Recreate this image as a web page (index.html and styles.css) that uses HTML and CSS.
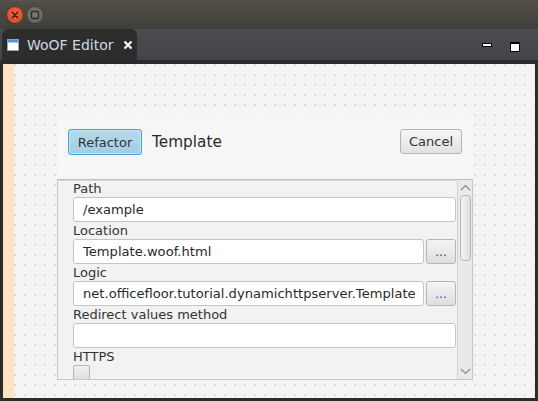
FILE: index.html
```html
<!DOCTYPE html>
<html>
<head>
<meta charset="utf-8">
<link rel="stylesheet" href="styles.css">
</head>
<body>
<div class="window">
  <div class="titlebar">
    <span class="wbtn close">
      <svg width="16" height="16" viewBox="0 0 16 16"><path d="M5.3 5.3 L10.7 10.7 M10.7 5.3 L5.3 10.7" stroke="#3a1a10" stroke-width="1.4" stroke-linecap="round"/></svg>
    </span>
    <span class="wbtn max">
      <svg width="16" height="16" viewBox="0 0 16 16"><rect x="4.5" y="4.5" width="7" height="7" rx="1" fill="none" stroke="#2c2b28" stroke-width="1.3"/></svg>
    </span>
  </div>
  <div class="tabbar">
    <div class="tab">
      <svg class="tabicon" width="12" height="12" viewBox="0 0 12 12"><rect x="0.5" y="0.5" width="11" height="11" fill="#ffffff" stroke="#8fa6c0"/><rect x="1" y="1" width="10" height="2.5" fill="#5d8fcf"/></svg>
      <span class="tabtitle">WoOF Editor</span>
      <svg class="tabclose" width="10" height="10" viewBox="0 0 10 10"><path d="M1.5 1.5 L8.5 8.5 M8.5 1.5 L1.5 8.5" stroke="#ffffff" stroke-width="2.2"/></svg>
    </div>
    <div class="tabtools">
      <span class="tminimize"></span>
      <span class="tmaximize"></span>
    </div>
  </div>
  <div class="frame">
    <div class="gutter"></div>
    <div class="canvas">
      <div class="dialog">
        <div class="dheader">
          <button class="btn refactor">Refactor</button>
          <span class="dtitle">Template</span>
          <button class="btn cancel">Cancel</button>
        </div>
        <div class="list">
          <div class="form">
            <div class="label">Path</div>
            <div class="row"><div class="field">/example</div></div>
            <div class="label">Location</div>
            <div class="row"><div class="field">Template.woof.html</div><button class="dots">...</button></div>
            <div class="label">Logic</div>
            <div class="row"><div class="field">net.officefloor.tutorial.dynamichttpserver.Template</div><button class="dots">...</button></div>
            <div class="label">Redirect values method</div>
            <div class="row"><div class="field"></div></div>
            <div class="label">HTTPS</div>
            <div class="check"></div>
          </div>
          <div class="scrollbar">
            <svg class="arrow" width="11" height="7" viewBox="0 0 11 7"><path d="M1 6 L5.5 1.5 L10 6" fill="none" stroke="#8a8a8a" stroke-width="1.2"/></svg>
            <div class="track"><div class="thumb"></div></div>
            <svg class="arrow" width="11" height="7" viewBox="0 0 11 7"><path d="M1 1 L5.5 5.5 L10 1" fill="none" stroke="#8a8a8a" stroke-width="1.2"/></svg>
          </div>
        </div>
      </div>
    </div>
  </div>
</div>
</body>
</html>
```

FILE: styles.css
```css
html, body {
  margin: 0;
  padding: 0;
  background: #2b2b2b;
}
.window {
  width: 538px;
  height: 401px;
  display: flex;
  flex-direction: column;
  font-family: "DejaVu Sans", sans-serif;
  overflow: hidden;
}
.titlebar {
  height: 29px;
  flex: none;
  box-sizing: border-box;
  background: linear-gradient(#5a574f 0, #514e47 2px, #3f3e3a 100%);
  display: flex;
  align-items: center;
  padding: 0 0 0 7px;
  gap: 4px;
}
.wbtn {
  width: 16px;
  height: 16px;
  border-radius: 50%;
  display: block;
  box-sizing: border-box;
}
.wbtn svg { display: block; }
.close {
  background: radial-gradient(circle at 50% 40%, #f26a42 0, #e3502a 60%, #c7431f 100%);
  box-shadow: 0 0 0 0.5px #3a2a22;
}
.max {
  background: radial-gradient(circle at 50% 40%, #7a7872 0, #68665f 70%, #58564f 100%);
  box-shadow: 0 0 0 0.5px #33322e;
}
.tabbar {
  height: 31px;
  flex: none;
  background: linear-gradient(#4a4c51, #43454a);
  display: flex;
  align-items: stretch;
  padding-left: 2px;
}
.tab {
  width: 135px;
  background: #2d2d2d;
  border-radius: 6px 6px 0 0;
  display: flex;
  align-items: center;
  box-sizing: border-box;
  padding: 1px 0 0 5px;
}
.tabicon { display: block; flex: none; }
.tabtitle {
  margin-left: 8px;
  font-size: 14px;
  color: #cfd9e4;
  white-space: nowrap;
}
.tabclose { display: block; margin-left: 9px; flex: none; }
.tabtools {
  margin-left: auto;
  display: flex;
  align-items: center;
  padding-right: 18px;
  gap: 18px;
  padding-top: 1px;
}
.tminimize {
  width: 10px;
  height: 4px;
  box-sizing: border-box;
  background: #ffffff;
  border: 1px solid #000;
}
.tmaximize {
  width: 10px;
  height: 10px;
  box-sizing: border-box;
  background: #ffffff;
  border: 1px solid #000;
  border-top-width: 2px;
  margin-top: 3px;
}
.frame {
  flex: 1;
  display: flex;
  background: #2b2b2b;
  padding: 4px 3px 3px 3px;
  min-height: 0;
}
.gutter {
  width: 11px;
  flex: none;
  background: #fde3c3;
}
.canvas {
  flex: 1;
  background-color: #f4f4f4;
  background-image: radial-gradient(circle at 1px 1px, #dadada 0.8px, rgba(0,0,0,0) 1px);
  background-size: 10px 10px;
  background-position: 0px 0px;
  padding: 42px 0 0 43px;
  min-height: 0;
}
.dialog {
  width: 416px;
  background: linear-gradient(rgba(247,247,247,0.5) 0, #f6f6f6 12px, #f7f7f7 100%);
}
.dheader {
  height: 73px;
  box-sizing: border-box;
  display: flex;
  align-items: flex-start;
  padding: 23px 11px 0 11px;
}
.btn {
  font-family: "DejaVu Sans", sans-serif;
  font-size: 13px;
  color: #333;
  border-radius: 3px;
  padding: 0;
  margin: 0;
}
.refactor {
  width: 74px;
  height: 26px;
  border: 1px solid #3ea4d1;
  background: linear-gradient(#b6dbeb, #a1cee3);
  box-shadow: inset 0 0 0 1px #c3e4f2;
}
.cancel {
  width: 62px;
  height: 25px;
  margin-left: auto;
  border: 1px solid #b3b3b3;
  background: linear-gradient(#f6f6f6, #e2e2e2);
}
.dtitle {
  font-size: 15.3px;
  color: #2a2a2a;
  margin-left: 10px;
  line-height: 26px;
}
.list {
  height: 201px;
  box-sizing: border-box;
  border: 1px solid #c6c6c6;
  border-top: 1px solid #bdbdbd;
  box-shadow: inset 0 1px 0 #d8d8d8;
  background: #f2f2f2;
  display: flex;
  overflow: hidden;
}
.form {
  flex: 1;
  padding: 0 1px 0 15px;
  min-width: 0;
}
.label {
  height: 17px;
  line-height: 17px;
  font-size: 13px;
  color: #333;
  white-space: nowrap;
}
.row {
  display: flex;
  gap: 2px;
  height: 25px;
}
.field {
  flex: 1;
  box-sizing: border-box;
  height: 25px;
  background: #ffffff;
  border: 1px solid #c4c4c4;
  border-radius: 3px;
  font-size: 13.1px;
  color: #2a2a2a;
  line-height: 23px;
  padding-left: 9px;
  white-space: nowrap;
  overflow: hidden;
}
.dots {
  width: 30px;
  height: 25px;
  flex: none;
  box-sizing: border-box;
  border: 1px solid #b5b5b5;
  border-radius: 3px;
  background: linear-gradient(#f5f5f5, #dedede);
  font-family: "DejaVu Sans", sans-serif;
  font-size: 12px;
  color: #3b3f9a;
  padding: 0;
  margin: 0;
}
.check {
  width: 17px;
  height: 17px;
  box-sizing: border-box;
  border: 1px solid #b5b5b5;
  border-radius: 2px;
  background: linear-gradient(#f2f2f2, #dcdcdc);
}
.scrollbar {
  width: 15px;
  flex: none;
  box-sizing: border-box;
  border-left: 1px solid #d0d0d0;
  background: #e9e9e9;
  display: flex;
  flex-direction: column;
  align-items: center;
}
.arrow { display: block; flex: none; margin: 4px 0 4px 0; }
.track {
  flex: 1;
  width: 100%;
  display: flex;
  justify-content: center;
}
.thumb {
  width: 11px;
  height: 66px;
  box-sizing: border-box;
  border: 1px solid #b6b6b6;
  border-radius: 4px;
  background: linear-gradient(90deg, #f3f3f3, #e0e0e0);
}
```
